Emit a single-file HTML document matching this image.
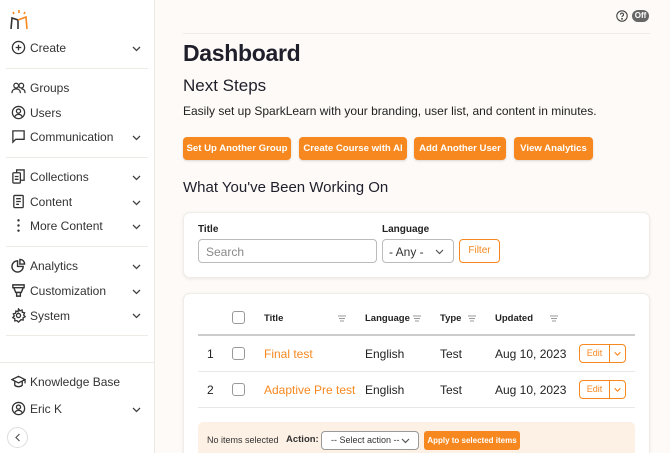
<!DOCTYPE html>
<html><head><style>
*{box-sizing:border-box;margin:0;padding:0}
html,body{width:670px;height:453px;overflow:hidden}
body{background:#fdfaf7;font-family:"Liberation Sans",sans-serif;color:#222;position:relative}
.a{position:absolute;white-space:nowrap}
#sb{position:absolute;left:0;top:0;width:155px;height:453px;background:#fff;border-right:1px solid #ece8e4}
.it{position:absolute;left:30px;font-size:12px;color:#333}
.ic{position:absolute;left:11px;width:15px;height:15px}
.chev{position:absolute;left:131px;width:11px;height:11px}
.hr{position:absolute;left:6px;width:142px;height:1px;background:#eeeae6}
.btn{position:absolute;top:137px;height:23px;background:#f7881f;color:#fff;font-size:9.6px;font-weight:bold;border-radius:4px;text-align:center;line-height:23px;box-shadow:0 1px 2px rgba(0,0,0,.15);white-space:nowrap}
.card{position:absolute;left:183px;width:467px;background:#fff;border-radius:7px;box-shadow:0 1px 3px rgba(0,0,0,.08);border:1px solid #f1ece7}
.cb{position:absolute;width:13px;height:13px;border:1px solid #999;border-radius:3px;background:#fff}
.td{position:absolute;font-size:12px;color:#222;white-space:nowrap}
.th{position:absolute;top:313px;font-size:9.5px;font-weight:bold;color:#222}
.so{position:absolute;top:315px;width:8px;height:7px}
.edit{position:absolute;left:579px;width:47px;height:19px;border:1px solid #f7881f;border-radius:4px;background:#fff}
</style></head><body>
<div id="sb">
<svg class="a" style="left:8px;top:9px" width="22" height="22" viewBox="0 0 22 22" fill="none" stroke="#f7881f" stroke-width="1.6"><path d="M5 3l1 2M11 1v3M17 3l-1 2" /><path d="M3 20l1-11 6 2v9" stroke="#333"/><path d="M10 11l8-3 1 12"/></svg>
<svg class="ic" style="top:40px" viewBox="0 0 16 16" fill="none" stroke="#333" stroke-width="1.4"><circle cx="8" cy="8" r="6.5"/><path d="M8 5v6M5 8h6"/></svg><div class="it" style="top:41px">Create</div>
<div class="hr" style="top:68px"></div>
<svg class="ic" style="top:80px" viewBox="0 0 16 16" fill="none" stroke="#333" stroke-width="1.3"><circle cx="5.5" cy="6" r="2.5"/><circle cx="11" cy="6" r="2.5"/><path d="M1 14c0-3 2-4.5 4.5-4.5S10 11 10 14M11 9.5c2.5 0 4 1.5 4 4.5"/></svg><div class="it" style="top:81px">Groups</div>
<svg class="ic" style="top:105px" viewBox="0 0 16 16" fill="none" stroke="#333" stroke-width="1.4"><circle cx="8" cy="8" r="6.5"/><circle cx="8" cy="6.5" r="2.2"/><path d="M4 12.5c1-2 2.5-2.5 4-2.5s3 .5 4 2.5"/></svg><div class="it" style="top:106px">Users</div>
<svg class="ic" style="top:129px" viewBox="0 0 16 16" fill="none" stroke="#333" stroke-width="1.4"><path d="M2 2h12v9H5l-3 3z"/></svg><div class="it" style="top:130px">Communication</div>
<div class="hr" style="top:157px"></div>
<svg class="ic" style="top:169px" viewBox="0 0 16 16" fill="none" stroke="#333" stroke-width="1.4"><rect x="2" y="4" width="8" height="11" rx="1"/><path d="M6 4V1h8v11h-4M4 8h4M4 11h4"/></svg><div class="it" style="top:170px">Collections</div>
<svg class="ic" style="top:194px" viewBox="0 0 16 16" fill="none" stroke="#333" stroke-width="1.4"><rect x="3" y="1.5" width="10" height="13" rx="1"/><path d="M5.5 5h5M5.5 8h5M5.5 11h3"/></svg><div class="it" style="top:195px">Content</div>
<svg class="ic" style="top:218px" viewBox="0 0 16 16" fill="#333"><circle cx="8" cy="2.5" r="1.3"/><circle cx="8" cy="8" r="1.3"/><circle cx="8" cy="13.5" r="1.3"/></svg><div class="it" style="top:219px">More Content</div>
<div class="hr" style="top:246px"></div>
<svg class="ic" style="top:258px" viewBox="0 0 16 16" fill="none" stroke="#333" stroke-width="1.5"><path d="M7 3a6 6 0 1 0 6 6H7z"/><path d="M9.5 1.5a5 5 0 0 1 5 5h-5z"/></svg><div class="it" style="top:259px">Analytics</div>
<svg class="ic" style="top:283px" viewBox="0 0 16 16" fill="none" stroke="#333" stroke-width="1.5"><path d="M2 2h12v3H2zM3 5l2 5h6l2-5M6 10v4h4v-4"/></svg><div class="it" style="top:284px">Customization</div>
<svg class="ic" style="top:308px" viewBox="0 0 16 16" fill="none" stroke="#333" stroke-width="1.4"><circle cx="8" cy="8" r="2.2"/><path d="M8 1l1.5 2 2.3-.8.3 2.4 2.4.6-1 2.3 1.6 1.8-2.2 1.1.1 2.4-2.4-.3L8 15l-1.6-1.5-2.4.3.1-2.4-2.2-1.1L3.5 8.5 2.5 6.2l2.4-.6.3-2.4 2.3.8z"/></svg><div class="it" style="top:309px">System</div>
<div class="hr" style="top:335px"></div>
<div class="a" style="left:0;top:362px;width:155px;height:1px;background:#eeeae6"></div>
<svg class="ic" style="top:374px" viewBox="0 0 16 16" fill="none" stroke="#333" stroke-width="1.4"><path d="M1 6l7-3.5L15 6 8 9.5zM4 8v4c2 2 6 2 8 0V8M15 6v4"/></svg><div class="it" style="top:375px">Knowledge Base</div>
<svg class="ic" style="top:401px" viewBox="0 0 16 16" fill="none" stroke="#333" stroke-width="1.4"><circle cx="8" cy="8" r="6.5"/><circle cx="8" cy="6.5" r="2.2"/><path d="M4 12.5c1-2 2.5-2.5 4-2.5s3 .5 4 2.5"/></svg><div class="it" style="top:402px">Eric K</div>
<div class="a" style="left:7px;top:427px;width:21px;height:21px;border:1px solid #ddd;border-radius:50%;background:#fff"></div>
<svg class="a" style="left:14px;top:433px" width="8" height="9" viewBox="0 0 8 9" fill="none" stroke="#555" stroke-width="1.2"><path d="M5.5 1L2 4.5 5.5 8"/></svg>
<svg class="chev" style="top:43px" viewBox="0 0 11 11" fill="none" stroke="#444" stroke-width="1.3"><path d="M2 4l3.5 3.5L9 4"/></svg>
<svg class="chev" style="top:132px" viewBox="0 0 11 11" fill="none" stroke="#444" stroke-width="1.3"><path d="M2 4l3.5 3.5L9 4"/></svg>
<svg class="chev" style="top:172px" viewBox="0 0 11 11" fill="none" stroke="#444" stroke-width="1.3"><path d="M2 4l3.5 3.5L9 4"/></svg>
<svg class="chev" style="top:197px" viewBox="0 0 11 11" fill="none" stroke="#444" stroke-width="1.3"><path d="M2 4l3.5 3.5L9 4"/></svg>
<svg class="chev" style="top:221px" viewBox="0 0 11 11" fill="none" stroke="#444" stroke-width="1.3"><path d="M2 4l3.5 3.5L9 4"/></svg>
<svg class="chev" style="top:261px" viewBox="0 0 11 11" fill="none" stroke="#444" stroke-width="1.3"><path d="M2 4l3.5 3.5L9 4"/></svg>
<svg class="chev" style="top:286px" viewBox="0 0 11 11" fill="none" stroke="#444" stroke-width="1.3"><path d="M2 4l3.5 3.5L9 4"/></svg>
<svg class="chev" style="top:310px" viewBox="0 0 11 11" fill="none" stroke="#444" stroke-width="1.3"><path d="M2 4l3.5 3.5L9 4"/></svg>
<svg class="chev" style="top:404px" viewBox="0 0 11 11" fill="none" stroke="#444" stroke-width="1.3"><path d="M2 4l3.5 3.5L9 4"/></svg>
</div>

<svg class="a" style="left:616px;top:10px" width="12" height="12" viewBox="0 0 12 12" fill="none" stroke="#444" stroke-width="1.1"><circle cx="6" cy="6" r="5.2"/><path d="M4.5 4.6a1.5 1.5 0 1 1 2 1.4c-.4.2-.5.5-.5 1"/><circle cx="6" cy="8.8" r=".4" fill="#444"/></svg>
<div class="a" style="left:632px;top:10px;width:17px;height:12px;border-radius:6px;background:#666;color:#fff;font-size:8px;font-weight:bold;text-align:center;line-height:12px">Off</div>
<div class="a" style="left:183px;top:33px;width:467px;height:1px;background:#efebe7"></div>

<div class="a" style="left:183px;top:40px;font-size:23px;font-weight:bold;color:#1f1f2b;letter-spacing:-.3px">Dashboard</div>
<div class="a" style="left:183px;top:76px;font-size:17px;color:#1f1f2b">Next Steps</div>
<div class="a" style="left:183px;top:104px;font-size:12px;color:#222">Easily set up SparkLearn with your branding, user list, and content in minutes.</div>
<div class="btn" style="left:183px;width:108px">Set Up Another Group</div>
<div class="btn" style="left:299px;width:108px">Create Course with AI</div>
<div class="btn" style="left:414px;width:92px">Add Another User</div>
<div class="btn" style="left:514px;width:79px">View Analytics</div>
<div class="a" style="left:183px;top:179px;font-size:15px;color:#1f1f2b">What You've Been Working On</div>

<div class="card" style="top:212px;height:66px"></div>
<div class="a" style="left:198px;top:224px;font-size:10px;font-weight:bold">Title</div>
<div class="a" style="left:382px;top:224px;font-size:10px;font-weight:bold">Language</div>
<div class="a" style="left:198px;top:239px;width:179px;height:24px;border:1px solid #bbb;border-radius:4px;background:#fff;font-size:12px;color:#888;padding:5px 7px">Search</div>
<div class="a" style="left:382px;top:239px;width:72px;height:24px;border:1px solid #bbb;border-radius:4px;background:#fff;font-size:12px;color:#333;padding:5px 6px">- Any -</div>
<svg class="a" style="left:434px;top:246px" width="11" height="11" viewBox="0 0 11 11" fill="none" stroke="#555" stroke-width="1.2"><path d="M2 4l3.5 3.5L9 4"/></svg>
<div class="a" style="left:459px;top:239px;width:41px;height:24px;border:1.5px solid #f7881f;border-radius:4px;background:#fff;font-size:10px;color:#f7881f;text-align:center;line-height:21px">Filter</div>

<div class="card" style="top:293px;height:170px"></div>
<div class="cb" style="left:232px;top:311px"></div>
<div class="th" style="left:264px">Title</div>
<div class="th" style="left:365px">Language</div>
<div class="th" style="left:440px">Type</div>
<div class="th" style="left:495px">Updated</div>
<svg class="so" style="left:338px" viewBox="0 0 8 7" stroke="#999" stroke-width="1"><path d="M0 1h8M1 3.5h6M2 6h4"/></svg>
<svg class="so" style="left:413px" viewBox="0 0 8 7" stroke="#999" stroke-width="1"><path d="M0 1h8M1 3.5h6M2 6h4"/></svg>
<svg class="so" style="left:468px" viewBox="0 0 8 7" stroke="#999" stroke-width="1"><path d="M0 1h8M1 3.5h6M2 6h4"/></svg>
<svg class="so" style="left:550px" viewBox="0 0 8 7" stroke="#999" stroke-width="1"><path d="M0 1h8M1 3.5h6M2 6h4"/></svg>
<div class="a" style="left:198px;top:334px;width:437px;height:2px;background:#ccc"></div>

<div class="td" style="left:207px;top:347px">1</div>
<div class="cb" style="left:232px;top:347px"></div>
<div class="td" style="left:264px;top:347px;color:#f7881f">Final test</div>
<div class="td" style="left:365px;top:347px">English</div>
<div class="td" style="left:440px;top:347px">Test</div>
<div class="td" style="left:495px;top:347px">Aug 10, 2023</div>
<div class="edit" style="top:344px"><div class="a" style="left:0;top:0;width:30px;height:17px;border-right:1px solid #f7881f;font-size:9px;color:#f7881f;text-align:center;line-height:17px">Edit</div><svg class="a" style="left:33px;top:4px" width="9" height="9" viewBox="0 0 11 11" fill="none" stroke="#f7881f" stroke-width="1.4"><path d="M2 4l3.5 3.5L9 4"/></svg></div>
<div class="a" style="left:198px;top:371px;width:437px;height:1px;background:#e8e8e8"></div>

<div class="td" style="left:207px;top:383px">2</div>
<div class="cb" style="left:232px;top:383px"></div>
<div class="td" style="left:264px;top:383px;color:#f7881f">Adaptive Pre test</div>
<div class="td" style="left:365px;top:383px">English</div>
<div class="td" style="left:440px;top:383px">Test</div>
<div class="td" style="left:495px;top:383px">Aug 10, 2023</div>
<div class="edit" style="top:380px"><div class="a" style="left:0;top:0;width:30px;height:17px;border-right:1px solid #f7881f;font-size:9px;color:#f7881f;text-align:center;line-height:17px">Edit</div><svg class="a" style="left:33px;top:4px" width="9" height="9" viewBox="0 0 11 11" fill="none" stroke="#f7881f" stroke-width="1.4"><path d="M2 4l3.5 3.5L9 4"/></svg></div>
<div class="a" style="left:198px;top:407px;width:437px;height:1px;background:#e8e8e8"></div>

<div class="a" style="left:198px;top:422px;width:437px;height:31px;background:#fdf0e5;border-radius:5px 5px 0 0"></div>
<div class="a" style="left:207px;top:435px;font-size:9px;color:#333">No items selected</div>
<div class="a" style="left:286px;top:434px;font-size:9.5px;font-weight:bold;color:#333">Action:</div>
<div class="a" style="left:321px;top:431px;width:98px;height:19px;border:1px solid #999;border-radius:4px;background:#fff;font-size:9px;color:#333;padding:3px 9px">-- Select action --</div>
<svg class="a" style="left:400px;top:435px" width="11" height="11" viewBox="0 0 11 11" fill="none" stroke="#555" stroke-width="1.2"><path d="M2 4l3.5 3.5L9 4"/></svg>
<div class="a" style="left:424px;top:431px;width:96px;height:19px;background:#f7881f;border-radius:3px;color:#fff;font-size:8px;font-weight:bold;text-align:center;line-height:19px">Apply to selected items</div>
</body></html>
